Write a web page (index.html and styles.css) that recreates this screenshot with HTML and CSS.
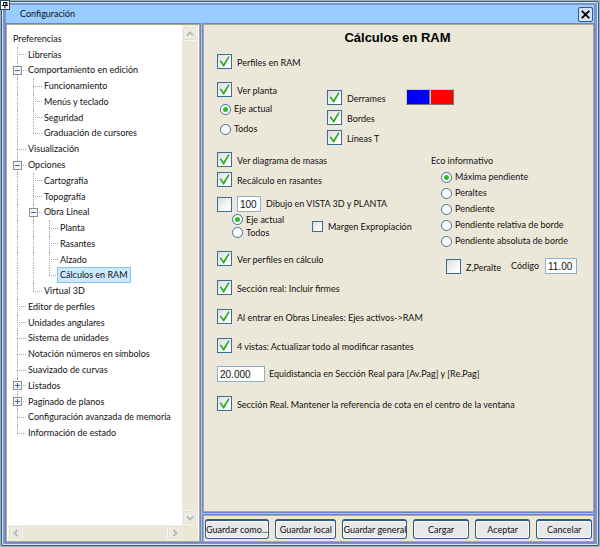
FILE: index.html
```html
<!DOCTYPE html>
<html lang="es">
<head>
<meta charset="utf-8">
<title>Configuración</title>
<link rel="stylesheet" href="styles.css">
</head>
<body>
<div class="window">
  <svg class="pin" viewBox="0 0 10 10" aria-hidden="true"><rect x=".5" y=".5" width="9" height="9" fill="#fff" stroke="#2c4a66"/><path d="M3 2.500h4M3.500 2v3.500M6 2v3.500M6.800 2v3.500M2 5.500h6M5 5.500v3" stroke="#000" fill="none"/></svg>
  <div class="frame">
    <header class="titlebar">
      <span>Configuración</span>
      <button class="close" aria-label="Cerrar"><svg viewBox="0 0 14 14"><path d="M3 3l8 8M11 3l-8 8" stroke="#000" stroke-width="2"/></svg></button>
    </header>
    <div class="body">
      <nav class="sidebar">
        <ul class="tree">
          <li class="root">Preferencias</li>
          <li><i class="tee"></i><span>Librerías</span></li>
          <li><i class="tee"></i><button class="toggle minus" aria-label="Contraer"></button><span>Comportamiento en edición</span></li>
          <li><i class="bar"></i><i class="tee"></i><span>Funcionamiento</span></li>
          <li><i class="bar"></i><i class="tee"></i><span>Menús y teclado</span></li>
          <li><i class="bar"></i><i class="tee"></i><span>Seguridad</span></li>
          <li><i class="bar"></i><i class="tee end"></i><span>Graduación de cursores</span></li>
          <li><i class="tee"></i><span>Visualización</span></li>
          <li><i class="tee"></i><button class="toggle minus" aria-label="Contraer"></button><span>Opciones</span></li>
          <li><i class="bar"></i><i class="tee"></i><span>Cartografía</span></li>
          <li><i class="bar"></i><i class="tee"></i><span>Topografía</span></li>
          <li><i class="bar"></i><i class="tee"></i><button class="toggle minus" aria-label="Contraer"></button><span>Obra Lineal</span></li>
          <li><i class="bar"></i><i class="bar"></i><i class="tee"></i><span>Planta</span></li>
          <li><i class="bar"></i><i class="bar"></i><i class="tee"></i><span>Rasantes</span></li>
          <li><i class="bar"></i><i class="bar"></i><i class="tee"></i><span>Alzado</span></li>
          <li><i class="bar"></i><i class="bar"></i><i class="tee end"></i><span class="selected">Cálculos en RAM</span></li>
          <li><i class="bar"></i><i class="tee end"></i><span>Virtual 3D</span></li>
          <li><i class="tee"></i><span>Editor de perfiles</span></li>
          <li><i class="tee"></i><span>Unidades angulares</span></li>
          <li><i class="tee"></i><span>Sistema de unidades</span></li>
          <li><i class="tee"></i><span>Notación números en símbolos</span></li>
          <li><i class="tee"></i><span>Suavizado de curvas</span></li>
          <li><i class="tee"></i><button class="toggle plus" aria-label="Expandir"></button><span>Listados</span></li>
          <li><i class="tee"></i><button class="toggle plus" aria-label="Expandir"></button><span>Paginado de planos</span></li>
          <li><i class="tee"></i><span>Configuración avanzada de memoria</span></li>
          <li><i class="tee end"></i><span>Información de estado</span></li>
        </ul>
        <div class="vscroll">
          <button aria-label="Subir"><svg viewBox="0 0 8 8"><path d="M1 5.500l3-3 3 3"/></svg></button>
          <button aria-label="Bajar"><svg viewBox="0 0 8 8"><path d="M1 2.500l3 3 3-3"/></svg></button>
        </div>
        <div class="hscroll">
          <button aria-label="Izquierda"><svg viewBox="0 0 8 8"><path d="M5.500 1l-3 3 3 3"/></svg></button>
          <button aria-label="Derecha"><svg viewBox="0 0 8 8"><path d="M2.500 1l3 3-3 3"/></svg></button>
        </div>
        <div class="corner"></div>
      </nav>
      <div class="main">
        <main class="panel">
          <h1>Cálculos en RAM</h1>
          <label class="check"><input type="checkbox" checked>Perfiles en RAM</label>
          <section class="plan">
            <div class="plan-view">
              <label class="check"><input type="checkbox" checked>Ver planta</label>
              <label class="radio"><input type="radio" name="planta" checked>Eje actual</label>
              <label class="radio"><input type="radio" name="planta">Todos</label>
            </div>
            <div class="plan-lines">
              <label class="check"><input type="checkbox" checked>Derrames</label>
              <label class="check"><input type="checkbox" checked>Bordes</label>
              <label class="check"><input type="checkbox" checked>Líneas T</label>
            </div>
            <div class="swatches"><button class="blue" aria-label="Azul"></button><button class="red" aria-label="Rojo"></button></div>
          </section>
          <section class="middle">
            <div class="drawing">
              <label class="check"><input type="checkbox" checked>Ver diagrama de masas</label>
              <label class="check"><input type="checkbox" checked>Recálculo en rasantes</label>
              <div class="view3d">
                <input type="checkbox" aria-label="Activar dibujo">
                <input class="num" type="text" id="n3d" value="100"><label for="n3d">Dibujo en VISTA 3D y PLANTA</label>
              </div>
              <div class="margin">
                <div class="axis">
                  <label class="radio"><input type="radio" name="dibujo" checked>Eje actual</label>
                  <label class="radio"><input type="radio" name="dibujo">Todos</label>
                </div>
                <label class="check small"><input type="checkbox">Margen Expropiación</label>
              </div>
            </div>
            <fieldset class="eco">
              <legend>Eco informativo</legend>
              <label class="radio"><input type="radio" name="eco" checked>Máxima pendiente</label>
              <label class="radio"><input type="radio" name="eco">Peraltes</label>
              <label class="radio"><input type="radio" name="eco">Pendiente</label>
              <label class="radio"><input type="radio" name="eco">Pendiente relativa de borde</label>
              <label class="radio"><input type="radio" name="eco">Pendiente absoluta de borde</label>
              <div class="code">
                <label class="check"><input type="checkbox">Z,Peralte</label>
                <label class="code-label" for="cod">Código</label><input class="num" type="text" id="cod" value="11.00">
              </div>
            </fieldset>
          </section>
          <section class="options">
            <label class="check"><input type="checkbox" checked>Ver perfiles en cálculo</label>
            <label class="check"><input type="checkbox" checked>Sección real: Incluir firmes</label>
            <label class="check"><input type="checkbox" checked>Al entrar en Obras Lineales: Ejes activos-&gt;RAM</label>
            <label class="check"><input type="checkbox" checked>4 vistas: Actualizar todo al modificar rasantes</label>
            <div class="distance"><input class="num" type="text" id="eq" value="20.000"><label for="eq">Equidistancia en Sección Real para [Av.Pag] y [Re.Pag]</label></div>
            <label class="check"><input type="checkbox" checked>Sección Real. Mantener la referencia de cota en el centro de la ventana</label>
          </section>
        </main>
        <footer class="actions">
          <button class="wide">Guardar como...</button>
          <button class="wide">Guardar local</button>
          <button class="wide">Guardar general</button>
          <button>Cargar</button>
          <button>Aceptar</button>
          <button>Cancelar</button>
        </footer>
      </div>
    </div>
  </div>
</div>
</body>
</html>
```
FILE: styles.css
```css
* { box-sizing: border-box; }
body {
  margin: 0;
  background: #9fb3ad;
  color: #111;
  font: 9px/12px Lato, "Liberation Sans", sans-serif;
}
button, input { font: inherit; color: inherit; margin: 0; padding: 0; }
.window {
  position: relative;
  min-height: 100vh;
  padding: 1px;
  display: flex;
}
.frame {
  flex: 1;
  display: flex;
  flex-direction: column;
  border: 1px solid #2f5a85;
  border-radius: 2px;
  background: #7d93cf;
  box-shadow: inset 0 0 0 1px #dfe3e6;
  padding: 3px 4px;
}
.pin { position: absolute; left: 0; top: 0; width: 10px; height: 10px; }
.titlebar {
  display: flex;
  align-items: center;
  justify-content: space-between;
  height: 18px;
  padding: 0 1px 0 14px;
  background: #99ccff;
}
.close {
  width: 15px;
  height: 15px;
  border: 1px solid #2f5a85;
  border-radius: 2px;
  background: #d5e0f0;
  display: grid;
}
.body {
  flex: 1;
  display: grid;
  grid-template-columns: 194px minmax(0, 1fr);
  gap: 3px;
  padding-top: 1px;
  background: #a9c2f6;
}
.sidebar, .panel, .actions {
  border: 1px solid #b0a590;
  box-shadow: 0 0 0 1px #6a84d0;
}
.sidebar {
  display: grid;
  grid-template: 1fr 16px / minmax(0, 1fr) 16px;
  background: #fff;
  padding: 0 1px;
}
.tree {
  margin: 6px 0 0;
  padding: 0 0 0 5px;
  list-style: none;
  display: grid;
  grid-auto-rows: 1fr;
  height: 410px;
}
.tree li { display: flex; align-items: center; position: relative; white-space: nowrap; }
.tree span { padding: 1px 2px; }
.tree span.selected { background: #cde8ff; box-shadow: 0 0 0 1px #7cc6ee; }
.tree i { align-self: stretch; width: 16px; display: grid; grid-template-columns: 4px 9px; }
.tree i::before { content: ""; grid-area: 1 / 2; border-left: 1px dotted #aaa; }
.tree i.tee::after { content: ""; grid-area: 1 / 2; align-self: center; border-top: 1px dotted #aaa; }
.tree i.end::before { height: 50%; }
.tree i + span { margin-left: -3px; }
.toggle {
  width: 9px;
  height: 9px;
  margin: 0 3px 0 -16px;
  border: 1px solid #8a8f98;
  background: linear-gradient(#4464b0, #4464b0) center / 5px 1px no-repeat #f4f4f2;
  z-index: 1;
}
.toggle + span { margin-left: 1px; }
.toggle.plus {
  background: linear-gradient(#4464b0, #4464b0) center / 5px 1px no-repeat,
    linear-gradient(#4464b0, #4464b0) center / 1px 5px no-repeat, #f4f4f2;
}
.vscroll, .hscroll, .corner { background: #ebe8d9; }
.vscroll, .hscroll { display: flex; justify-content: space-between; }
.vscroll { flex-direction: column; padding-top: 1px; }
.vscroll button, .hscroll button {
  width: 15px;
  height: 15px;
  border: 1px solid #f8f7f2;
  border-radius: 2px;
  background: #ecebe4;
  box-shadow: inset 0 0 0 1px #e0ded2;
  display: grid;
  place-items: center;
}
.vscroll svg, .hscroll svg { width: 8px; height: 8px; fill: none; stroke: #bdbbae; stroke-width: 2; }
.main { display: flex; flex-direction: column; gap: 3px; min-width: 0; }
.panel {
  flex: 1;
  background: #ebe8d9;
  padding: 5px 11px 0 13px;
}
h1 {
  margin: 0 0 7px;
  padding-right: 4px;
  text-align: center;
  color: #000;
  font: bold 13px/16px "Liberation Sans", sans-serif;
}
.check, .radio { display: flex; align-items: center; white-space: nowrap; }
.check { gap: 5px; height: 16px; align-items: flex-end; line-height: 13px; }
.radio { gap: 3px; height: 16px; }
input[type="checkbox"], input[type="radio"] {
  appearance: none;
  flex: none;
  display: grid;
  border: 1px solid #3f6c96;
}
input[type="checkbox"] { width: 15px; height: 15px; background: linear-gradient(135deg, #dcdcd7, #fff 80%); }
input[type="checkbox"]:checked::before {
  content: "";
  background: #1ba61b;
  clip-path: polygon(12% 46%, 24% 42%, 42% 70%, 80% 10%, 90% 14%, 44% 92%);
}
input[type="radio"] { width: 11px; height: 11px; border-radius: 50%; background: #fff; place-items: center; }
input[type="radio"]:checked::before { content: ""; width: 5px; height: 5px; border-radius: 50%; background: #2dbb2d; }
.small { align-items: center; }
.small input[type="checkbox"] { width: 11px; height: 11px; }
.num {
  height: 16px;
  border: 1px solid #8fb0cf;
  background: #fff;
  padding: 0 2px;
  font: 10px/14px "Liberation Sans", sans-serif;
}
.plan { display: flex; align-items: flex-start; margin-top: 12px; }
.plan-view { width: 110px; }
.plan-view .radio { padding-left: 3px; height: 20px; }
.plan-view .check { margin-bottom: 2px; }
.plan-lines { width: 79px; margin-top: 8px; display: grid; gap: 4px; }
.swatches { margin-top: 8px; display: flex; }
.swatches button { width: 24px; height: 16px; border: 1px outset #ccc; }
.swatches .blue { background: #00f; }
.swatches .red { background: #f00; }
.middle { display: flex; justify-content: space-between; margin-top: 6px; }
.drawing > .check { margin-bottom: 4px; }
.view3d { display: flex; align-items: center; gap: 5px; height: 16px; margin-top: 9px; }
.view3d .num { width: 24px; }
.margin { display: flex; align-items: center; gap: 28px; padding: 1px 0 0 15px; }
.margin .radio { height: 13px; }
.eco { margin: 0; border: 0; padding: 4px 0 0; width: 151px; min-width: 0; }
.eco legend { padding: 0; float: left; width: 100%; height: 14px; }
.eco .radio { clear: both; padding-left: 10px; }
.code { display: flex; align-items: center; padding-left: 15px; margin-top: 9px; }
.code-label { margin: 0 6px 0 auto; }
.code .num { width: 32px; margin-right: 5px; }
.options { display: grid; gap: 13px; margin-top: -24px; justify-items: start; }
.distance { display: flex; align-items: center; gap: 4px; }
.distance .num { width: 48px; }
.actions {
  display: flex;
  gap: 6px;
  padding: 3px 1px 2px;
  background: #ebe8d9;
}
.actions button {
  flex: 57 1 0;
  height: 20px;
  border: 1px solid #2f5a85;
  border-top-width: 2px;
  border-radius: 3px;
  background: #e8e8e8;
  box-shadow: inset 0 0 0 1px #fff;
  white-space: nowrap;
}
.actions .wide { flex-grow: 63; }
```
